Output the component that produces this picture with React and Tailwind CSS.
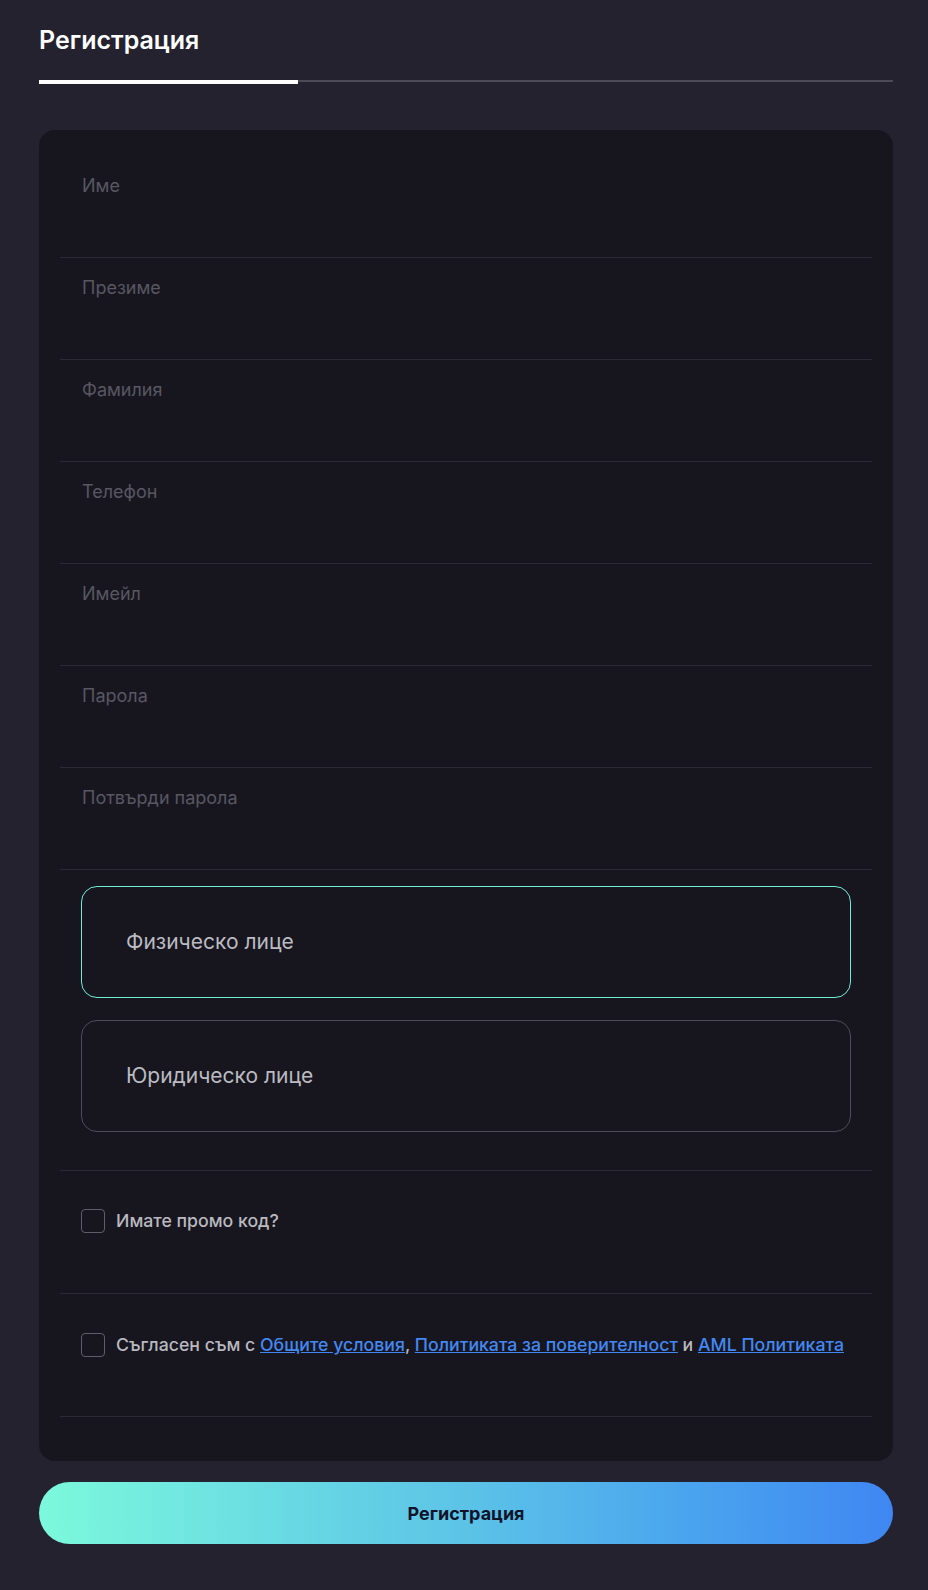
import { useState } from 'react';

const fields = ['Име', 'Презиме', 'Фамилия', 'Телефон', 'Имейл', 'Парола', 'Потвърди парола'];

export default function App() {
  const [personType, setPersonType] = useState('individual');
  const [promo, setPromo] = useState(false);
  const [agree, setAgree] = useState(false);

  return (
    <div className="min-h-screen bg-[#23222e] pl-[39px] pr-[35px] pt-[24px] pb-[47px] font-['Inter',sans-serif]">
      {/* Header with tab */}
      <h1 className="text-[25px] leading-[32px] font-semibold text-white">Регистрация</h1>
      <div className="mt-[24px] flex items-start">
        <div className="w-[259px] h-[4px] bg-white"></div>
        <div className="flex-1 h-[2px] bg-[#4b4a55]"></div>
      </div>

      {/* Form card */}
      <div className="mt-[46px] bg-[#17161f] rounded-[16px] pt-[26px] px-[21px] pb-[44px]">
        {fields.map((label) => (
          <div key={label} className="h-[102px] border-b border-[#2a2935] px-[22px] pt-[18px]">
            <input
              type={label.includes('арола') ? 'password' : 'text'}
              placeholder={label}
              className="w-full bg-transparent outline-none text-[18px] leading-[24px] text-white placeholder:text-[#585762]"
            />
          </div>
        ))}

        {/* Person type */}
        <div className="px-[21px] pt-[16px] pb-[38px] border-b border-[#2a2935] flex flex-col gap-[22px]">
          <button
            type="button"
            onClick={() => setPersonType('individual')}
            className={`h-[112px] rounded-[16px] border pl-[44px] flex items-center text-[21px] text-[#bbbbc1] ${personType === 'individual' ? 'border-[#72ecd0]' : 'border-[#4d4c57]'}`}
          >
            Физическо лице
          </button>
          <button
            type="button"
            onClick={() => setPersonType('company')}
            className={`h-[112px] rounded-[16px] border pl-[44px] flex items-center text-[21px] text-[#bbbbc1] ${personType === 'company' ? 'border-[#72ecd0]' : 'border-[#4d4c57]'}`}
          >
            Юридическо лице
          </button>
        </div>

        {/* Promo code */}
        <div className="h-[123px] border-b border-[#2a2935] px-[21px] pt-[37px]">
          <label className="flex items-center gap-[11px] cursor-pointer">
            <span
              onClick={() => setPromo(!promo)}
              className="w-[24px] h-[24px] rounded-[4px] border border-[#5f5e68] shrink-0"
            ></span>
            <span className="text-[17.7px] font-medium text-[#b9b9bf]">Имате промо код?</span>
          </label>
        </div>

        {/* Terms */}
        <div className="h-[123px] border-b border-[#2a2935] px-[21px] pt-[38px]">
          <label className="flex items-center gap-[11px] cursor-pointer">
            <span
              onClick={() => setAgree(!agree)}
              className="w-[24px] h-[24px] rounded-[4px] border border-[#5f5e68] shrink-0"
            ></span>
            <span className="text-[17.7px] font-medium text-[#b9b9bf]">
              Съгласен съм с{' '}
              <a href="#" className="text-[#4388f2] underline">Общите условия</a>,{' '}
              <a href="#" className="text-[#4388f2] underline">Политиката за поверителност</a> и{' '}
              <a href="#" className="text-[#4388f2] underline">AML Политиката</a>
            </span>
          </label>
        </div>
      </div>

      {/* Submit */}
      <button
        type="button"
        className="mt-[21px] w-full h-[62px] rounded-full bg-linear-to-r from-[#7cf9db] via-[#5cc3e7] to-[#3f86f2] text-[18px] font-bold text-[#10132a]"
      >
        Регистрация
      </button>
    </div>
  );
}
